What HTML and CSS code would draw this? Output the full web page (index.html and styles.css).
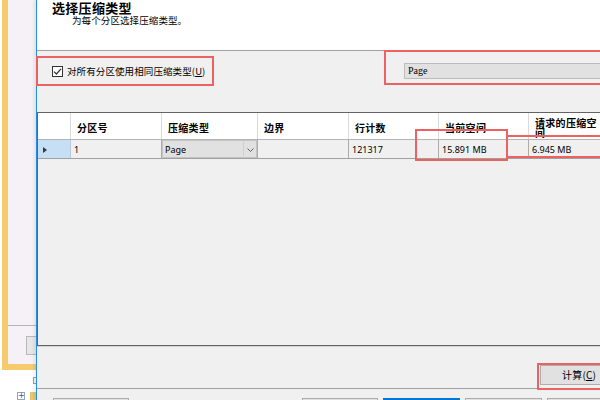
FILE: index.html
```html
<!DOCTYPE html>
<html>
<head>
<meta charset="utf-8">
<link rel="stylesheet" href="styles.css">
</head>
<body>
<div class="side">
  <div class="frame">
    <div class="frame-top"></div>
    <div class="frame-btn"></div>
  </div>
  <div class="tree">
    <div class="tree-row1"><span class="minus"></span></div>
    <div class="tree-row2"><span class="plus">+</span><span class="folder"></span></div>
  </div>
</div>
<div class="dialog">
  <div class="head">
    <div class="title">选择压缩类型</div>
    <div class="sub">为每个分区选择压缩类型。</div>
  </div>
  <div class="opts">
    <div class="opt-check">
      <span class="checkbox"><svg width="9" height="9" viewBox="0 0 9 9"><path d="M1 4.6 L3.4 7 L8 1.8" fill="none" stroke="#333" stroke-width="1.2"/></svg></span>
      <span>对所有分区使用相同压缩类型(<u>U</u>)</span>
    </div>
    <div class="opt-select">
      <div class="select">Page</div>
    </div>
  </div>
  <div class="grid">
    <div class="gh">
      <div class="hc"></div>
      <div class="hc">分区号</div>
      <div class="hc">压缩类型</div>
      <div class="hc">边界</div>
      <div class="hc">行计数</div>
      <div class="hc">当前空间</div>
      <div class="hc wrap">请求的压缩空间</div>
    </div>
    <div class="gr">
      <div class="rc rowhead"><svg width="4" height="6" viewBox="0 0 4 6"><polygon points="0,0 4,3 0,6" fill="#3a3a3a"/></svg></div>
      <div class="rc">1</div>
      <div class="rc combo"><span class="combo-text">Page</span><span class="combo-btn"><svg width="7" height="4" viewBox="0 0 7 4"><polyline points="0.5,0.5 3.5,3.5 6.5,0.5" fill="none" stroke="#606060" stroke-width="1"/></svg></span></div>
      <div class="rc"></div>
      <div class="rc">121317</div>
      <div class="rc">15.891 MB</div>
      <div class="rc">6.945 MB</div>
    </div>
    <div class="mark mark-a"></div>
    <div class="mark mark-b"></div>
  </div>
  <div class="calcbar">
    <div class="calc-wrap"><div class="btn calc">计算(<u>C</u>)</div></div>
  </div>
  <div class="bottom">
    <div class="btn b1"></div>
    <div class="btn b2"></div>
    <div class="btn b3 primary"></div>
    <div class="btn b4"></div>
    <div class="btn b5"></div>
  </div>
</div>
</body>
</html>
```
FILE: styles.css
```css
* { box-sizing: border-box; }
html, body { margin: 0; padding: 0; }
body {
  width: 600px;
  height: 400px;
  overflow: hidden;
  display: flex;
  background: #ffffff;
  font-family: "Noto Sans CJK SC", "Noto Sans", sans-serif;
  color: #000;
}

/* background window strip */
.side { width: 36px; flex: none; display: flex; flex-direction: column; }
.frame {
  margin-left: 2px;
  height: 371px;
  border-left: 6px solid #f6ca6e;
  border-bottom: 6px solid #f6ca6e;
  background: #f5f1f6;
  display: flex;
  flex-direction: column;
}
.frame-top { height: 326px; border-bottom: 1px solid #b4b4b4; flex: none; }
.frame-btn {
  margin: 10px 0 0 18px;
  height: 19px;
  border: 1px solid #b8b8b8;
  border-right: none;
  background: #e6e6e6;
}
.tree { flex: 1; }
.tree-row1 { height: 15px; padding: 7px 0 0 33px; }
.minus { display: block; width: 8px; height: 7px; border: 1px solid #a0a0a0; background: #f4f4f4; }
.tree-row2 { display: flex; padding: 7px 0 0 17px; gap: 5px; }
.plus {
  display: block; width: 8px; height: 8px; border: 1px solid #9aa4b4;
  font-size: 8px; line-height: 6px; color: #2060c0; text-align: center; font-family: "DejaVu Sans", sans-serif;
}
.folder { display: block; width: 8px; height: 8px; background: #e9c56a; }

/* dialog */
.dialog {
  width: 604px;
  flex: none;
  border-left: 1px solid #2b8de0;
  background: #f0f0f0;
  display: flex;
  flex-direction: column;
  box-shadow: -2px 0 3px rgba(0,0,0,0.08);
}
.head {
  height: 51px;
  flex: none;
  background: #ffffff;
  border-bottom: 1px solid #a0a0a0;
  padding: 1px 0 0 15px;
}
.title { font-size: 13px; line-height: 13px; font-weight: 700; letter-spacing: 0.3px; }
.sub { font-size: 9.5px; line-height: 10px; margin: 1px 0 0 20px; letter-spacing: 0.1px; }

.opts { height: 61px; flex: none; display: flex; align-items: flex-start; }
.opt-check {
  margin: 5px 0 0 -1px;
  width: 178px;
  height: 30px;
  border: 2px solid #ec6262;
  display: flex;
  align-items: center;
  gap: 4px;
  padding: 1px 0 0 14px;
  font-size: 9.5px;
  line-height: 11px;
  letter-spacing: 0.1px;
}
.checkbox {
  width: 11px; height: 11px; flex: none;
  border: 1px solid #333;
  background: #fff;
  display: flex; align-items: center; justify-content: center;
}
.opt-select {
  margin: -1px 0 0 170px;
  height: 35px;
  flex: 1;
  border: 2px solid #ec6262;
  border-right: none;
  padding: 11px 0 0 18px;
}
.select {
  height: 16px;
  background: #e1e1e1;
  border: 1px solid #bcbcbc;
  font-family: "Liberation Serif", serif;
  font-size: 10px;
  line-height: 14px;
  padding-left: 3px;
}

/* data grid */
.grid {
  position: relative;
  height: 234px;
  flex: none;
  border-top: 1px solid #646464;
  border-left: 1px solid #646464;
  border-bottom: 1px solid #646464;
}
.gh, .gr {
  display: grid;
  grid-template-columns: 33px 91px 96px 91px 90px 90px 72px;
}
.gh { height: 27px; background: #ffffff; border-bottom: 1px solid #b4b4b4; }
.hc {
  border-right: 1px solid #dadada;
  display: flex;
  align-items: center;
  padding: 3px 0 0 6px;
  font-size: 10px;
  line-height: 10px;
  font-weight: 700;
  letter-spacing: 0.3px;
}
.hc.wrap { padding: 3px 2px 0 6px; border-right: none; }
.gr { height: 19px; border-bottom: 1px solid #a0a0a0; background: #f0f0f0; }
.rc {
  border-right: 1px solid #acacac;
  display: flex;
  align-items: center;
  padding: 2px 0 0 3px;
  font-family: "Noto Sans", sans-serif;
  font-size: 9px;
  line-height: 10px;
}
.rowhead { background: #c5dff5; padding: 1px 0 0 5px; border-right-color: #b9c9d9; }
.combo { background: #e1e1e1; padding: 0; box-shadow: inset 0 0 0 1px #c4c4c4; }
.combo-text { flex: 1; padding: 2px 0 0 3px; }
.combo-btn {
  width: 14px; height: 100%;
  border-left: 1px solid #d0d0d0;
  display: flex; align-items: center; justify-content: center;
  padding-top: 1px;
}
.mark { position: absolute; border: 2px solid #ec6262; pointer-events: none; }
.mark-a { left: 377px; top: 16px; width: 93px; height: 32px; }
.mark-b { left: 469px; top: 22px; width: 140px; height: 23px; border-left: none; }

/* bottom areas */
.calcbar {
  height: 43px;
  flex: none;
  border-top: 1px solid #d2d2d2;
  border-bottom: 1px solid #a0a0a0;
  display: flex;
  align-items: flex-start;
}
.calc-wrap {
  margin: 16px 0 0 500px;
  width: 120px;
  height: 27px;
  border: 2px solid #ec6262;
  padding: 0 0 0 1px;
}
.btn {
  background: #e1e1e1;
  border: 1px solid #adadad;
  flex: none;
}
.calc {
  height: 20px;
  width: 100px;
  font-size: 10px;
  line-height: 17px;
  padding-left: 21px;
  letter-spacing: 0.2px;
}
.bottom { flex: 1; display: flex; padding-top: 9px; gap: 5px; }
.bottom .btn { height: 24px; }
.b1 { width: 76px; margin-left: 16px; }
.b2 { width: 76px; margin-left: 168px; }
.b3 { width: 77px; }
.b4 { width: 77px; }
.b5 { width: 77px; }
.primary { border: 2px solid #0078d7; }
```
